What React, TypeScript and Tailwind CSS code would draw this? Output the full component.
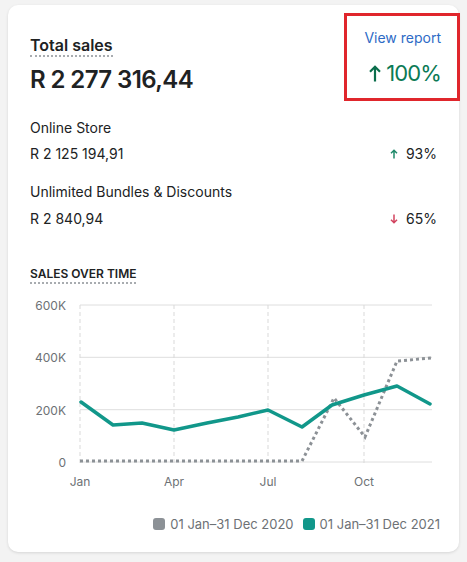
import React from "react";

const green = [
  [73, 112], [105, 135], [134, 133], [166, 140], [199, 133], [230, 127],
  [260, 120], [294, 137], [324, 115], [356, 105], [389, 96], [422, 114],
];
const gray = [
  [72, 171], [294, 171], [326, 108], [357, 147], [389, 71], [424, 68],
];

function pts(a: number[][]) {
  return a.map((p) => p.join(",")).join(" ");
}

function SmallArrow({ up, color }: { up: boolean; color: string }) {
  return (
    <svg width="8" height="10" viewBox="0 0 8 10" className="mr-[8px]">
      {up ? (
        <path d="M4 9.5V1.2M1 4.2L4 1.2L7 4.2" stroke={color} strokeWidth="1.5" fill="none" />
      ) : (
        <path d="M4 0.5V8.8M1 5.8L4 8.8L7 5.8" stroke={color} strokeWidth="1.5" fill="none" />
      )}
    </svg>
  );
}

function Chart() {
  const grid = [15, 67.3, 119.7, 172];
  const labels = ["600K", "400K", "200K", "0"];
  const vx = [72, 166, 260, 356];
  const months = ["Jan", "Apr", "Jul", "Oct"];
  return (
    <svg width="451" height="205" viewBox="0 0 451 205" className="block mt-[6px]">
      {grid.map((y, i) => (
        <line key={"h" + i} x1="72" x2="424" y1={y} y2={y} stroke="#dedede" strokeWidth="1" />
      ))}
      {vx.map((x, i) => (
        <line key={"v" + i} x1={x} x2={x} y1="15" y2="176" stroke="#d9d9d9" strokeWidth="1" strokeDasharray="4 3" />
      ))}
      {grid.map((y, i) => (
        <text key={"l" + i} x="58" y={y + 5} textAnchor="end" fontSize="12" fill="#6d7175" fontFamily="Inter, sans-serif">
          {labels[i]}
        </text>
      ))}
      {vx.map((x, i) => (
        <text key={"m" + i} x={x} y="196" textAnchor="middle" fontSize="12" fill="#6d7175" fontFamily="Inter, sans-serif">
          {months[i]}
        </text>
      ))}
      <polyline points={pts(gray)} fill="none" stroke="#8c9196" strokeWidth="3" strokeDasharray="3 3" />
      <polyline points={pts(green)} fill="none" stroke="#11978a" strokeWidth="3.5" strokeLinejoin="round" strokeLinecap="round" />
    </svg>
  );
}

export default function App() {
  return (
    <div className="w-[467px] h-[562px] bg-[#f3f3f3] pt-[5px] pl-[8px] font-['Inter',sans-serif] text-[#202223]">
      <div className="w-[451px] h-[547px] rounded-[10px] bg-white shadow-[0_1px_3px_rgba(0,0,0,0.12)] pt-[8px]">
        {/* header */}
        <div className="flex justify-between items-start pl-[22px]">
          <div className="mt-[20px]">
            <div className="inline-block text-[16px] leading-[20px] font-semibold border-b-2 border-dotted border-[#a8acb0]">
              Total sales
            </div>
            <div className="mt-[7px] text-[24px] leading-[32px] font-semibold tracking-[-0.025em]">
              R 2 277 316,44
            </div>
          </div>
          <div className="w-[116px] h-[88px] -mr-[1px] border-[3px] border-[#e0262c] pt-[12px] pr-[16px] flex flex-col items-end">
            <div className="text-[14px] leading-[20px] text-[#2e6bc6]">View report</div>
            <div className="mt-[11px] flex items-center text-[22px] leading-[28px] tracking-[-0.04em] text-[#0b7a55]">
              <svg width="12" height="17" viewBox="0 0 12 17" className="mr-[5px]">
                <path d="M6 16.5V1.8M1 6.8L6 1.8L11 6.8" stroke="#0b6e4c" strokeWidth="2.2" fill="none" />
              </svg>
              100%
            </div>
          </div>
        </div>

        {/* rows */}
        <div className="px-[22px] mt-[17px] text-[14px] leading-[20px]">
          <div>Online Store</div>
          <div className="mt-[6px] flex justify-between items-center">
            <span>R 2 125 194,91</span>
            <span className="flex items-center">
              <SmallArrow up color="#1f8a6a" />
              93%
            </span>
          </div>
          <div className="mt-[18px]">Unlimited Bundles &amp; Discounts</div>
          <div className="mt-[7px] flex justify-between items-center">
            <span>R 2 840,94</span>
            <span className="flex items-center">
              <SmallArrow up={false} color="#d2445f" />
              65%
            </span>
          </div>
        </div>

        {/* sales over time */}
        <div className="px-[22px] mt-[31px]">
          <div className="inline-block text-[12px] leading-[16px] font-semibold uppercase border-b-2 border-dotted border-[#a8acb0]">
            Sales over time
          </div>
        </div>
        <Chart />

        {/* legend */}
        <div className="mt-[21px] flex justify-end pr-[19px] text-[13px] leading-[16px] text-[#6d7175]">
          <div className="flex items-center">
            <span className="w-[12px] h-[12px] rounded-[3px] bg-[#8c9196] mr-[5px]" />
            01 Jan–31 Dec 2020
          </div>
          <div className="flex items-center ml-[9px]">
            <span className="w-[12px] h-[12px] rounded-[3px] bg-[#11978a] mr-[5px]" />
            01 Jan–31 Dec 2021
          </div>
        </div>
      </div>
    </div>
  );
}
